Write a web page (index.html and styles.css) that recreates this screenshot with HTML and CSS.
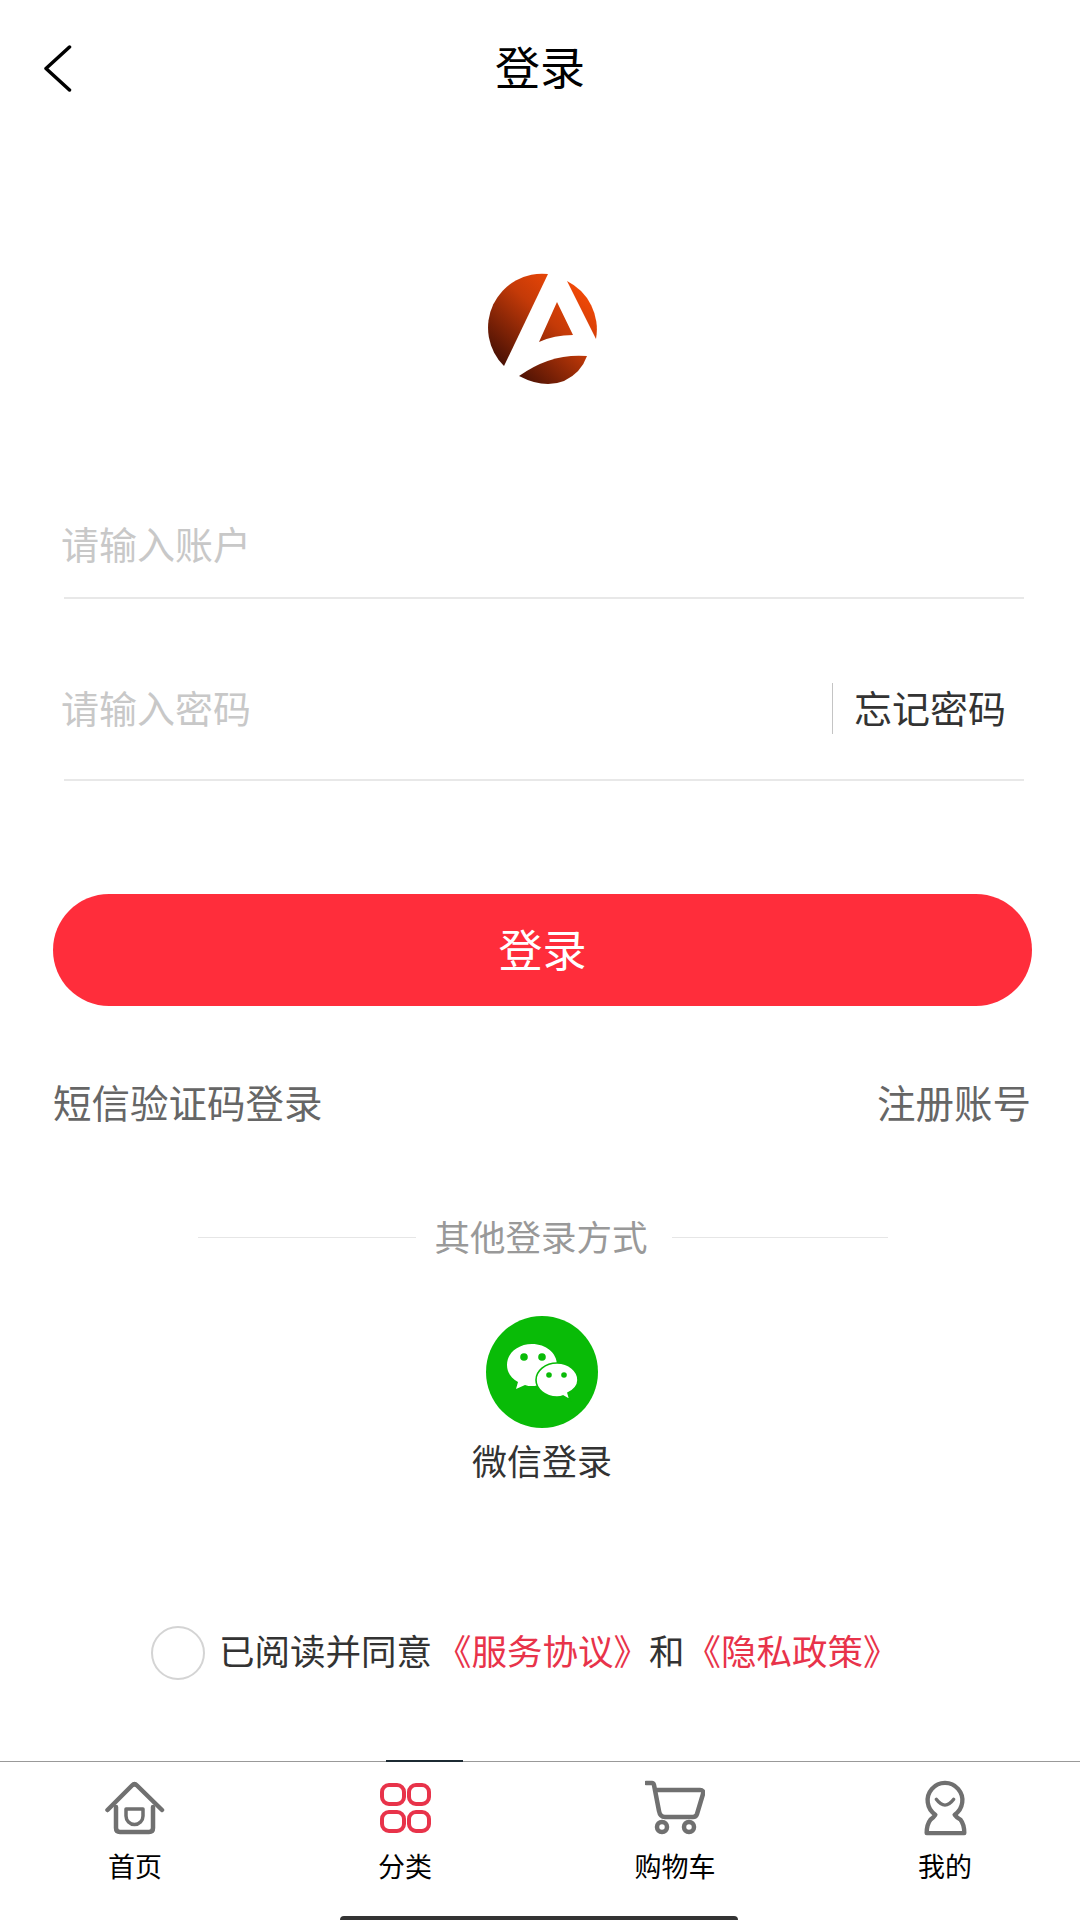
FILE: index.html
```html
<!DOCTYPE html>
<html lang="zh-CN">
<head>
    <meta charset="UTF-8">
    <meta name="viewport" content="width=device-width, initial-scale=1.0">
    <title>登录</title>
    <link rel="stylesheet" href="styles.css">
</head>
<body>
    <div class="page">
        <!-- Header -->
        <header class="top-bar">
            <svg class="back-icon" viewBox="0 0 30 48" width="30" height="48">
                <path d="M26.5 3 L3 24.5 L26.5 46"></path>
            </svg>
            <h1 class="top-title">登录</h1>
            <span></span>
        </header>

        <main class="content">
            <!-- Logo -->
            <div class="logo">
                <svg viewBox="39 30 120 120" width="120" height="120">
                    <defs>
                        <linearGradient id="logo-fill" gradientUnits="userSpaceOnUse" x1="155" y1="45" x2="70" y2="140">
                            <stop offset="0" stop-color="#ff4d06"></stop>
                            <stop offset="0.45" stop-color="#c43a08"></stop>
                            <stop offset="1" stop-color="#3f0d04"></stop>
                        </linearGradient>
                    </defs>
                    <g fill="url(#logo-fill)">
                        <path d="M107 34 A54 54 0 0 0 63 126 Z"></path>
                        <path d="M126 41 A54 54 0 0 1 155 99 Z"></path>
                        <path d="M116 62 L132 95 Q113 95 98 102 Z"></path>
                        <path d="M146 116 Q110 113 78 136 Q103 149 123 141 Q140 133 146 116 Z"></path>
                    </g>
                </svg>
            </div>

            <!-- Form -->
            <div class="field field-account">
                <span class="field-hint">请输入账户</span>
            </div>
            <div class="field field-password">
                <span class="field-hint">请输入密码</span>
                <span class="forgot">忘记密码</span>
            </div>

            <button type="button" class="login-button">登录</button>

            <div class="login-links">
                <span>短信验证码登录</span>
                <span>注册账号</span>
            </div>

            <!-- Other login -->
            <div class="other-title">
                <span class="other-line"></span>
                <span class="other-text">其他登录方式</span>
                <span class="other-line"></span>
            </div>

            <div class="wechat">
                <svg viewBox="0 0 112 112" width="112" height="112">
                    <circle cx="56" cy="56" r="56" fill="#09bb07"></circle>
                    <path d="M46 28 C32 28 21 37 21 49 C21 57 26 63 32 66 L30 73 L39 69 C41 70 44 70 46 70 C60 70 71 61 71 49 C71 37 60 28 46 28 Z" fill="#fff"></path>
                    <circle cx="38" cy="41" r="3.8" fill="#09bb07"></circle>
                    <circle cx="56" cy="41" r="3.8" fill="#09bb07"></circle>
                    <path d="M71 47 C59 47 50 55 50 64 C50 73 59 81 71 81 C73 81 75 81 77 80 L84 84 L82 77 C88 74 92 69 92 64 C92 55 83 47 71 47 Z" fill="#fff" stroke="#09bb07" stroke-width="1.6"></path>
                    <circle cx="63" cy="59" r="2.8" fill="#09bb07"></circle>
                    <circle cx="78" cy="59" r="2.8" fill="#09bb07"></circle>
                </svg>
                <span class="wechat-label">微信登录</span>
            </div>

            <!-- Agreement -->
            <div class="agree">
                <span class="agree-check"></span>
                <span class="agree-text">已阅读并同意<span class="agree-link">《服务协议》</span>和<span class="agree-link agree-link-last">《隐私政策》</span></span>
            </div>
        </main>

        <!-- Bottom nav -->
        <nav class="tab-bar">
            <div class="tab">
                <svg class="tab-icon" viewBox="0 0 60 56" width="60" height="56">
                    <path d="M2.5 30 L27 5.5 Q29.5 3 32 5.5 L57 30"></path>
                    <path d="M11 27 V48 Q11 52 15 52 H44 Q48 52 48 48 V27"></path>
                    <path d="M21 29 H38 V36 A8.5 8.5 0 0 1 21 36 Z" stroke-width="3.5"></path>
                </svg>
                <span class="tab-label">首页</span>
            </div>
            <div class="tab">
                <svg class="tab-icon tab-icon-active" viewBox="0 0 60 56" width="60" height="56">
                    <rect x="7" y="5" width="22" height="19" rx="7"></rect>
                    <rect x="34" y="5" width="20" height="19" rx="7"></rect>
                    <rect x="7" y="32" width="22" height="19" rx="7"></rect>
                    <rect x="34" y="32" width="20" height="19" rx="7"></rect>
                </svg>
                <span class="tab-label">分类</span>
            </div>
            <div class="tab">
                <svg class="tab-icon" viewBox="0 0 60 56" width="60" height="56">
                    <path d="M1 3 H7 Q8.5 3 9 5 L14 31 Q15 37 20 37 H48 Q51 37 52 34 L58 14 Q59 10 55 10 H10"></path>
                    <circle cx="17" cy="47" r="5"></circle>
                    <circle cx="44" cy="47" r="5"></circle>
                </svg>
                <span class="tab-label">购物车</span>
            </div>
            <div class="tab">
                <svg class="tab-icon" viewBox="0 0 50 58" width="50" height="56">
                    <path d="M15 36 A18 18 0 1 1 35 36 Q37 39 41 41 Q45 46 45 55 H6 Q6 46 10 41 Q13 39 15 36 Z"></path>
                    <path d="M16 20 Q25 32 34 20" stroke-width="3.5"></path>
                </svg>
                <span class="tab-label">我的</span>
            </div>
            <span class="home-bar"></span>
        </nav>
    </div>
</body>
</html>
```

FILE: styles.css
```css
/* Page */
body {
    margin: 0;
    background-color: #ffffff;
    font-family: "Noto Sans CJK SC", "Noto Sans", sans-serif;
    color: #333333;
}

.page {
    width: 1080px;
    height: 1920px;
    display: flex;
    flex-direction: column;
    overflow: hidden;
}

/* Header */
.top-bar {
    height: 136px;
    flex-shrink: 0;
    display: grid;
    grid-template-columns: 200px 1fr 200px;
    align-items: center;
}

.back-icon {
    margin-left: 43px;
    fill: none;
    stroke: #000000;
    stroke-width: 3.5;
    stroke-linecap: round;
    stroke-linejoin: round;
}

.top-title {
    margin: 0 0 6px;
    text-align: center;
    font-size: 45px;
    font-weight: normal;
    color: #000000;
}

.content {
    flex: 1;
    display: flex;
    flex-direction: column;
}

/* Logo */
.logo {
    margin-top: 134px;
    height: 120px;
    display: flex;
    justify-content: center;
}

/* Form */
.field {
    margin: 0 56px 0 64px;
    display: flex;
    align-items: center;
    border-bottom: 2px solid #e8e8e8;
}

.field-account {
    margin-top: 103px;
    height: 104px;
}

.field-password {
    margin-top: 39px;
    height: 141px;
}

.field-hint {
    margin-left: -3px;
    margin-bottom: 4px;
    font-size: 38px;
    line-height: 50px;
    color: #c8c8c8;
}

.forgot {
    margin-left: auto;
    margin-right: 18px;
    padding-left: 21px;
    padding-bottom: 4px;
    border-left: 1px solid #c4c4c4;
    font-size: 38px;
    line-height: 47px;
    color: #333333;
}

.login-button {
    display: block;
    margin: 113px 48px 0 53px;
    height: 112px;
    padding-bottom: 6px;
    border: none;
    border-radius: 56px;
    background-color: #ff2d3b;
    color: #ffffff;
    font-family: inherit;
    font-size: 44px;
}

.login-links {
    margin: 67px 49px 0 53px;
    display: flex;
    justify-content: space-between;
    font-size: 38.5px;
    line-height: 56px;
    color: #666666;
}

/* Other login */
.other-title {
    margin-top: 88px;
    padding-left: 6px;
    display: flex;
    justify-content: center;
    align-items: center;
    gap: 18px;
    font-size: 35.5px;
    line-height: 38px;
    color: #999999;
}

.other-text {
    padding-bottom: 2px;
}

.other-line {
    width: 218px;
    height: 1px;
    background-color: #e6e6e6;
}

.other-text + .other-line {
    width: 216px;
    margin-left: 6px;
}

.wechat {
    margin-top: 59px;
    display: flex;
    flex-direction: column;
    align-items: center;
    gap: 10px;
}

.wechat svg {
    margin-left: 3px;
}

.wechat-label {
    margin-left: 4px;
    font-size: 35px;
    line-height: 44px;
    color: #333333;
}

/* Agreement */
.agree {
    margin-top: 144px;
    padding-left: 151px;
    display: flex;
    align-items: center;
    gap: 14px;
}

.agree-check {
    width: 50px;
    height: 50px;
    border: 2px solid #d4d4d4;
    border-radius: 50%;
}

.agree-text {
    padding-bottom: 6px;
    font-size: 35.5px;
    line-height: 48px;
    color: #333333;
}

.agree-link {
    margin-left: 4px;
    color: #e8334a;
}

.agree-link-last {
    margin-left: 1px;
}

/* Bottom nav */
.tab-bar {
    position: relative;
    height: 159px;
    flex-shrink: 0;
    display: grid;
    grid-template-columns: repeat(4, 1fr);
    padding-top: 18px;
    box-sizing: border-box;
    border-top: 1px solid #999999;
}

/* dark sliver sitting on the divider */
.tab-bar::before {
    content: "";
    position: absolute;
    left: 386px;
    top: -2px;
    width: 77px;
    height: 2px;
    background-color: #1c2a33;
}

.tab {
    display: flex;
    flex-direction: column;
    align-items: center;
    gap: 12px;
}

.tab-icon {
    fill: none;
    stroke: #707070;
    stroke-width: 4.5;
    stroke-linecap: round;
    stroke-linejoin: round;
}

.tab-icon-active {
    stroke: #e8334a;
    stroke-width: 4;
}

.tab-label {
    font-size: 27px;
    line-height: 36px;
    color: #000000;
}

.home-bar {
    position: absolute;
    left: 340px;
    bottom: 0;
    width: 398px;
    height: 4px;
    border-radius: 4px 4px 0 0;
    background-color: #333333;
}
```
